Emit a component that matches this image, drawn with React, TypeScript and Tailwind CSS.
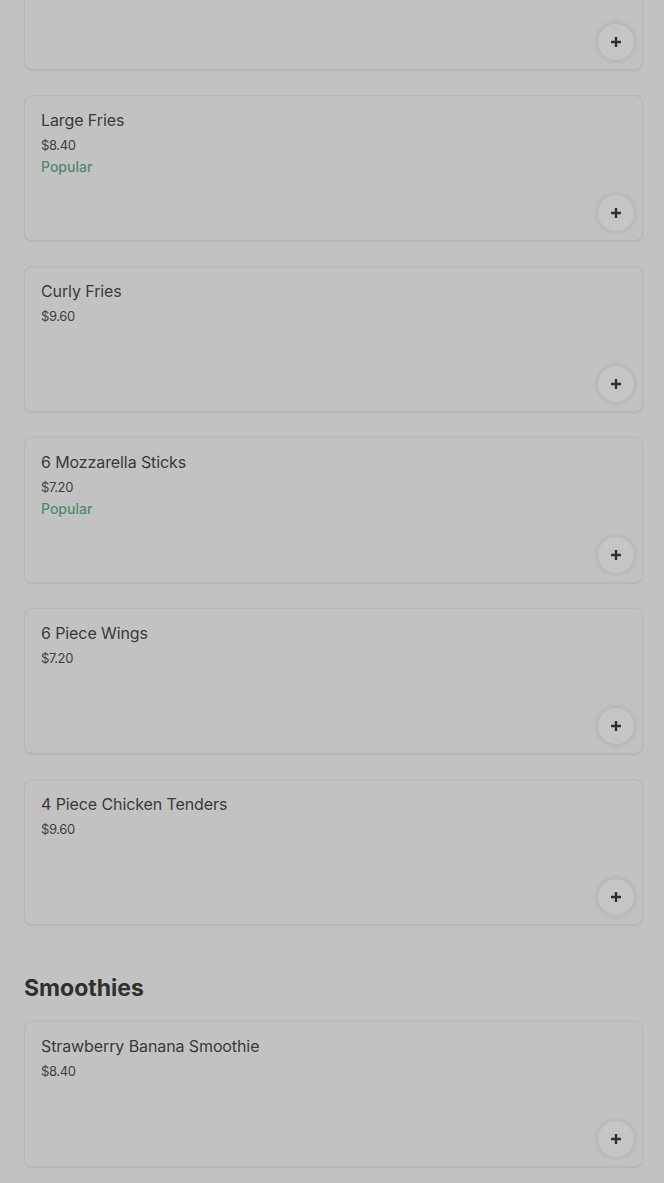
import React from "react";

type Item = { name: string; price: string; popular?: boolean };

const items: Item[] = [
  { name: "Small Fries", price: "$6.00" },
  { name: "Large Fries", price: "$8.40", popular: true },
  { name: "Curly Fries", price: "$9.60" },
  { name: "6 Mozzarella Sticks", price: "$7.20", popular: true },
  { name: "6 Piece Wings", price: "$7.20" },
  { name: "4 Piece Chicken Tenders", price: "$9.60" },
];

function Plus() {
  return (
    <svg width="12" height="12" viewBox="0 0 12 12" fill="none">
      <path d="M6 1v10M1 6h10" stroke="#2f2f2f" strokeWidth="2.4" />
    </svg>
  );
}

function Card({ item, hideText }: { item: Item; hideText?: boolean }) {
  return (
    <div className="relative h-[146px] rounded-[8px] border border-[#b7b7b7] bg-[#c2c2c2] shadow-[0_1px_2px_rgba(0,0,0,0.06)] px-4 pt-[12px] flex flex-col">
      {!hideText && (
        <>
          <div className="text-[16px] leading-[24px] text-[#3a3a3a] font-normal tracking-[-0.1px]">{item.name}</div>
          <div className="mt-[3px] text-[13px] leading-[20px] text-[#3f3f3f] tracking-[-0.4px]">{item.price}</div>
          {item.popular && (
            <div className="mt-[2px] text-[14px] leading-[20px] font-medium text-[#4f8b6d]">Popular</div>
          )}
        </>
      )}
      <div className="absolute right-[8px] bottom-[9px] w-[36px] h-[36px] rounded-full bg-[#c5c5c5] shadow-[0_0_6px_rgba(0,0,0,0.12)] flex items-center justify-center">
        <Plus />
      </div>
    </div>
  );
}

export default function App() {
  return (
    <div className="w-[664px] h-[1183px] overflow-hidden bg-[#c2c2c2]" style={{ fontFamily: "Inter, 'Noto Sans', sans-serif" }}>
      <div className="pl-6 pr-[21px] mt-[-76px] flex flex-col gap-[25px]">
        {items.map((it, i) => (
          <Card key={it.name} item={it} hideText={i === 0} />
        ))}
      </div>
      <div className="pl-6 mt-[49px] text-[23px] leading-[28px] font-bold text-[#303030] tracking-[0px]">Smoothies</div>
      <div className="pl-6 pr-[21px] mt-[19px] flex flex-col gap-[25px]">
        <Card item={{ name: "Strawberry Banana Smoothie", price: "$8.40" }} />
      </div>
    </div>
  );
}
